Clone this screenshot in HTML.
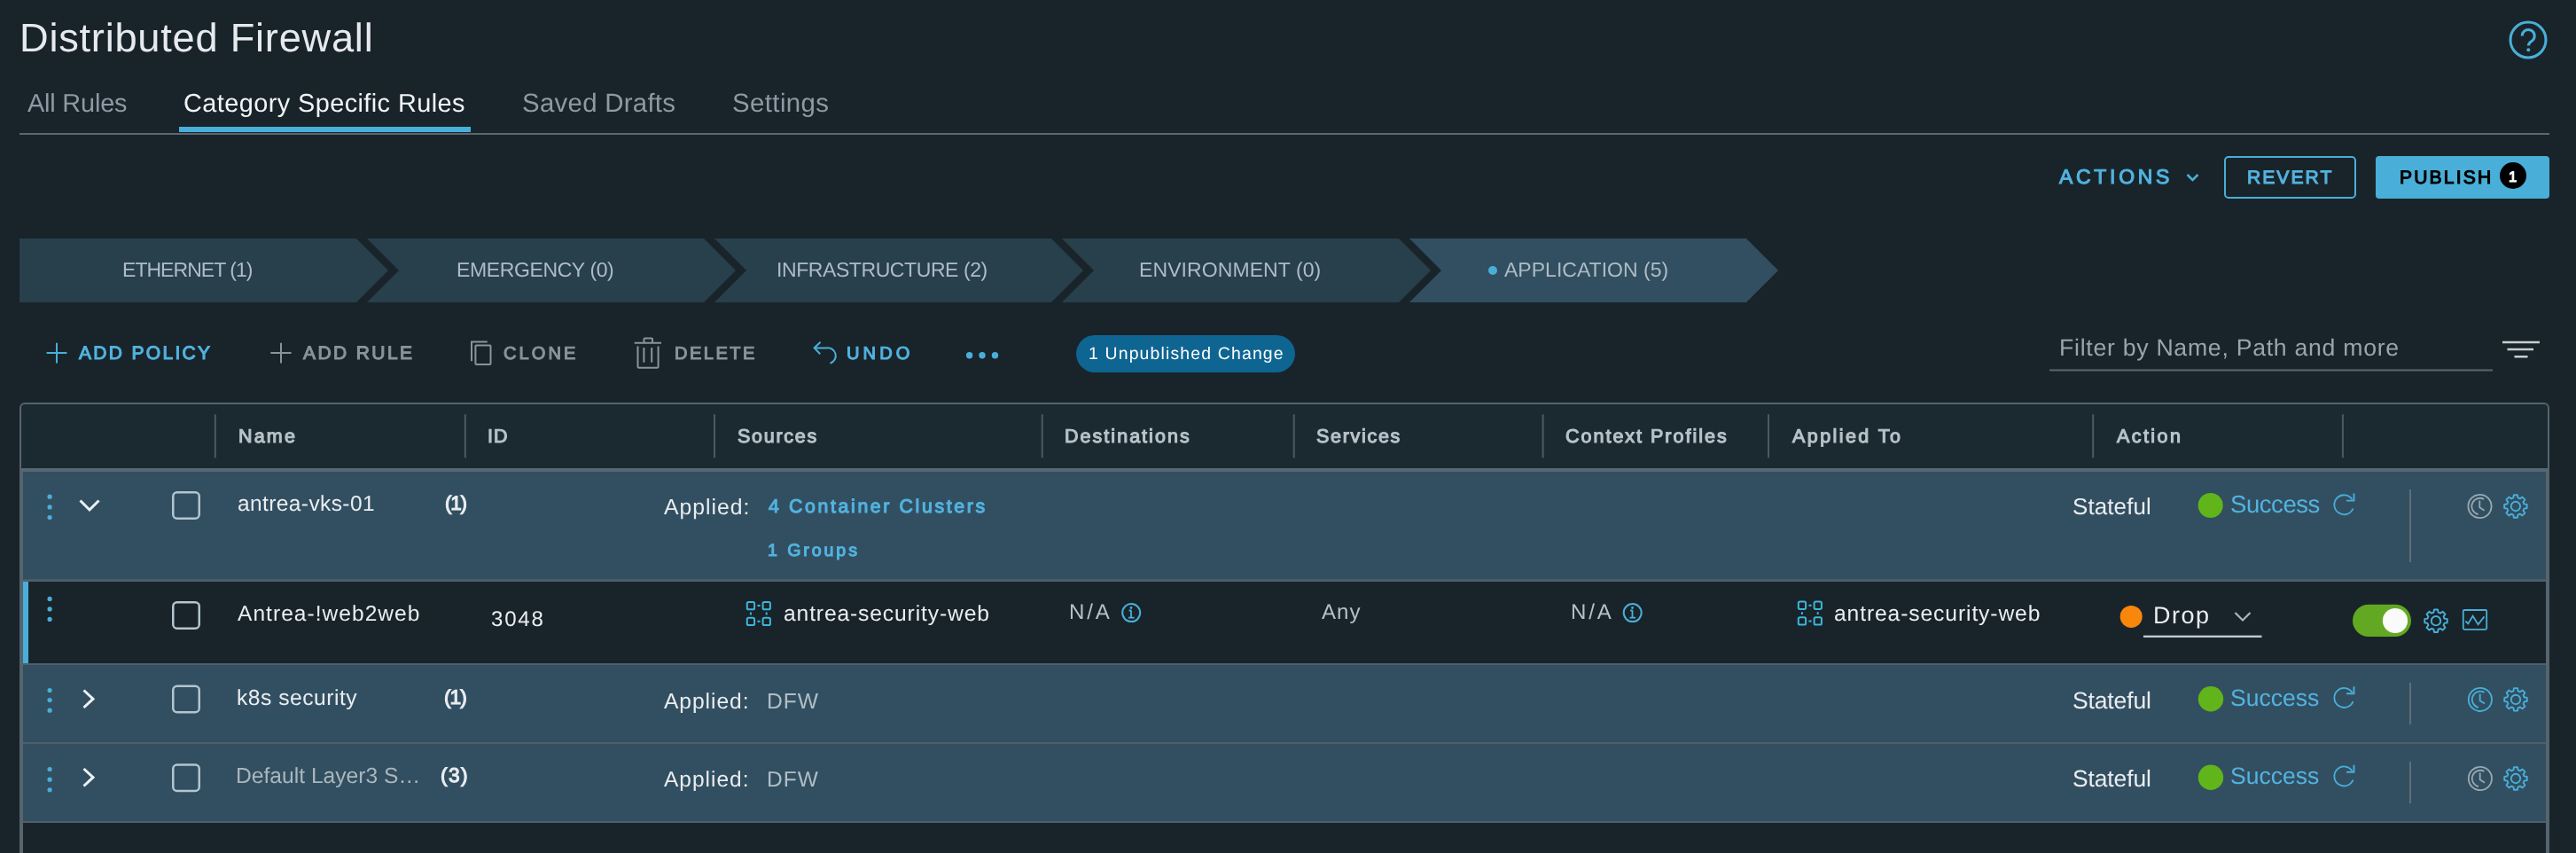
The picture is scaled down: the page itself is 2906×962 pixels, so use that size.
<!DOCTYPE html>
<html><head><meta charset="utf-8"><title>Distributed Firewall</title>
<style>
html,body{margin:0;padding:0;}
body{width:2906px;height:962px;overflow:hidden;background:#19242a;position:relative;font-family:"Liberation Sans",sans-serif;}
.s{position:absolute;left:0;top:0;}
.t{position:absolute;white-space:nowrap;line-height:1;will-change:transform;text-rendering:geometricPrecision;}
</style></head><body>
<svg class="s" width="2906" height="962" viewBox="0 0 2906 962"><rect x="22" y="150" width="2854" height="2" fill="#5b666d"/><rect x="202" y="143" width="329" height="6" fill="#49afd9"/><circle cx="2852" cy="45" r="20" fill="none" stroke="#49afd9" stroke-width="3"/><path d="M2845.2 40.5 A7 7 0 1 1 2856.5 46 Q2852.3 48.5 2852.3 51.5" fill="none" stroke="#49afd9" stroke-width="3"/><circle cx="2852.3" cy="56.3" r="2" fill="#49afd9"/><polyline points="2467.5,197 2473.5,203 2479.5,197" fill="none" stroke="#49afd9" stroke-width="2.5"/><rect x="2510" y="177" width="147" height="46" rx="4" fill="none" stroke="#49afd9" stroke-width="2"/><rect x="2680" y="176" width="196" height="48" rx="4" fill="#49afd9"/><circle cx="2835" cy="198" r="15" fill="#000"/><polygon points="22,269 402,269 438,305 402,341 22,341" fill="#283f4c"/><polygon points="414,269 794,269 830,305 794,341 414,341 450,305" fill="#283f4c"/><polygon points="806,269 1186,269 1222,305 1186,341 806,341 842,305" fill="#283f4c"/><polygon points="1198,269 1578,269 1614,305 1578,341 1198,341 1234,305" fill="#283f4c"/><polygon points="1590,269 1970,269 2006,305 1970,341 1590,341 1626,305" fill="#324f61"/><circle cx="1684" cy="305" r="5" fill="#49afd9"/><path d="M52.6 398 H75.4 M64 386.8 V409.4" stroke="#49afd9" stroke-width="2"/><path d="M305.3 398 H328.6 M317 386.8 V409.4" stroke="#8a9399" stroke-width="2"/><path d="M532 407.3 V385.4 H549.8" fill="none" stroke="#8a9399" stroke-width="2"/><rect x="536.4" y="389.6" width="17.1" height="21.3" rx="0.8" fill="none" stroke="#8a9399" stroke-width="2"/><path d="M715.7 386.8 H746 M726.5 386.8 V382.5 Q726.5 381.5 727.5 381.5 H735 Q736 381.5 736 382.5 V386.8 M719.5 390.5 V413.2 Q719.5 414.7 721 414.7 H741.1 Q742.6 414.7 742.6 413.2 V390.5 M726.4 391.9 V408.7 M735.2 391.9 V408.7" fill="none" stroke="#8a9399" stroke-width="2"/><path d="M925.6 385.8 L918.6 392.4 L925.2 399.3 M918.6 392.4 H932 A9 9 0 0 1 936.5 409.8" fill="none" stroke="#49afd9" stroke-width="2"/><circle cx="1093.6" cy="400.7" r="3.7" fill="#49afd9"/><circle cx="1108" cy="400.7" r="3.7" fill="#49afd9"/><circle cx="1122.5" cy="400.7" r="3.7" fill="#49afd9"/><rect x="1214" y="378" width="247" height="42" rx="21" fill="#0f6592"/><rect x="2312" y="416.5" width="500" height="2" fill="#5c6870"/><path d="M2823 386 H2865 M2828.5 394.1 H2858 M2836.5 402.3 H2851.5" stroke="#c6ced3" stroke-width="2.5"/><rect x="23" y="455" width="2852" height="700" rx="5" fill="#1b2a31" stroke="#56646e" stroke-width="2"/><rect x="24" y="528" width="2850" height="4" fill="#566773"/><rect x="241.8" y="467.3" width="2" height="49" fill="#4b5a64"/><rect x="523.8" y="467.3" width="2" height="49" fill="#4b5a64"/><rect x="805" y="467.3" width="2" height="49" fill="#4b5a64"/><rect x="1174.7" y="467.3" width="2" height="49" fill="#4b5a64"/><rect x="1458.7" y="467.3" width="2" height="49" fill="#4b5a64"/><rect x="1739.6" y="467.3" width="2" height="49" fill="#4b5a64"/><rect x="1994" y="467.3" width="2" height="49" fill="#4b5a64"/><rect x="2360.2" y="467.3" width="2" height="49" fill="#4b5a64"/><rect x="2641.9" y="467.3" width="2" height="49" fill="#4b5a64"/><rect x="22" y="532" width="2854" height="430" fill="#56646e"/><rect x="26" y="532" width="2846" height="121.5" fill="#324f61"/><rect x="26" y="653.5" width="2846" height="2.5" fill="#4e5f6b"/><rect x="26" y="656" width="2846" height="92" fill="#19242a"/><rect x="26" y="656" width="6" height="92" fill="#49afd9"/><rect x="26" y="748" width="2846" height="2" fill="#4e5f6b"/><rect x="26" y="750" width="2846" height="87" fill="#324f61"/><rect x="26" y="837" width="2846" height="2" fill="#4e5f6b"/><rect x="26" y="839" width="2846" height="87" fill="#324f61"/><rect x="26" y="926" width="2846" height="2" fill="#4e5f6b"/><rect x="26" y="928" width="2846" height="40" fill="#19242a"/><circle cx="56.1" cy="560.2" r="2.6" fill="#49afd9"/><circle cx="56.1" cy="571.9" r="2.6" fill="#49afd9"/><circle cx="56.1" cy="583.5" r="2.6" fill="#49afd9"/><polyline points="90.5,564.5 101,575 111.5,564.5" fill="none" stroke="#eef1f4" stroke-width="3"/><rect x="195.25" y="555.25" width="29.5" height="29.5" rx="4.5" fill="none" stroke="#b3c5cf" stroke-width="2.5"/><circle cx="2493.7" cy="570" r="14" fill="#61b51a"/><path d="M2653.60 563.30 A11 11 0 1 0 2654.50 573.50" fill="none" stroke="#49afd9" stroke-width="1.8"/><path d="M2647.10 564.60 H2655.50 V556.60" fill="none" stroke="#49afd9" stroke-width="1.9"/><rect x="2718" y="552" width="2" height="82" fill="#5e6e78"/><circle cx="2797.5" cy="571" r="13.1" fill="none" stroke="#9aa9b1" stroke-width="1.8"/><path d="M2802.10 563.00 A9.2 9.2 0 1 0 2795.60 580.00" fill="none" stroke="#9aa9b1" stroke-width="1.8"/><path d="M2797.30 564.50 V572.30 L2802.60 575.70" fill="none" stroke="#9aa9b1" stroke-width="1.8"/><path d="M2835.29 561.45 L2835.88 558.26 L2839.92 558.26 L2840.51 561.45 L2842.81 562.40 L2845.48 560.56 L2848.34 563.42 L2846.50 566.09 L2847.45 568.39 L2850.64 568.98 L2850.64 573.02 L2847.45 573.61 L2846.50 575.91 L2848.34 578.58 L2845.48 581.44 L2842.81 579.60 L2840.51 580.55 L2839.92 583.74 L2835.88 583.74 L2835.29 580.55 L2832.99 579.60 L2830.32 581.44 L2827.46 578.58 L2829.30 575.91 L2828.35 573.61 L2825.16 573.02 L2825.16 568.98 L2828.35 568.39 L2829.30 566.09 L2827.46 563.42 L2830.32 560.56 L2832.99 562.40Z" fill="none" stroke="#49afd9" stroke-width="1.9" stroke-linejoin="round"/><circle cx="2837.9" cy="571" r="5.2" fill="none" stroke="#49afd9" stroke-width="1.9"/><circle cx="56.1" cy="675.4" r="2.6" fill="#49afd9"/><circle cx="56.1" cy="686.9" r="2.6" fill="#49afd9"/><circle cx="56.1" cy="698.4" r="2.6" fill="#49afd9"/><rect x="195.25" y="679.25" width="29.5" height="29.5" rx="4.5" fill="none" stroke="#b3c5cf" stroke-width="2.5"/><rect x="842.80" y="679.00" width="8.3" height="8.3" rx="1.6" fill="none" stroke="#3db6d8" stroke-width="2"/><rect x="842.80" y="696.70" width="8.3" height="8.3" rx="1.6" fill="none" stroke="#3db6d8" stroke-width="2"/><rect x="860.60" y="679.00" width="8.3" height="8.3" rx="1.6" fill="none" stroke="#3db6d8" stroke-width="2"/><rect x="860.60" y="696.70" width="8.3" height="8.3" rx="1.6" fill="none" stroke="#3db6d8" stroke-width="2"/><path d="M854.40 683.10 H857.60 M854.40 700.80 H857.60 M846.90 690.60 V693.50 M864.70 690.60 V693.50" stroke="#3db6d8" stroke-width="2"/><circle cx="1276.2" cy="691.1" r="10" fill="none" stroke="#49afd9" stroke-width="2"/><circle cx="1276.0" cy="685.5" r="1.4" fill="#49afd9"/><path d="M1276.0 688.3000000000001 V696.5 M1273.0 696.7 H1279.6000000000001 M1273.6000000000001 688.5 H1276.2" stroke="#49afd9" stroke-width="1.8" fill="none"/><circle cx="1841.7" cy="691.1" r="10" fill="none" stroke="#49afd9" stroke-width="2"/><circle cx="1841.5" cy="685.5" r="1.4" fill="#49afd9"/><path d="M1841.5 688.3000000000001 V696.5 M1838.5 696.7 H1845.1000000000001 M1839.1000000000001 688.5 H1841.7" stroke="#49afd9" stroke-width="1.8" fill="none"/><rect x="2028.80" y="678.60" width="8.3" height="8.3" rx="1.6" fill="none" stroke="#3db6d8" stroke-width="2"/><rect x="2028.80" y="696.30" width="8.3" height="8.3" rx="1.6" fill="none" stroke="#3db6d8" stroke-width="2"/><rect x="2046.60" y="678.60" width="8.3" height="8.3" rx="1.6" fill="none" stroke="#3db6d8" stroke-width="2"/><rect x="2046.60" y="696.30" width="8.3" height="8.3" rx="1.6" fill="none" stroke="#3db6d8" stroke-width="2"/><path d="M2040.40 682.70 H2043.60 M2040.40 700.40 H2043.60 M2032.90 690.20 V693.10 M2050.70 690.20 V693.10" stroke="#3db6d8" stroke-width="2"/><circle cx="2404.2" cy="695.4" r="12.5" fill="#f8870b"/><polyline points="2521.5,691 2530,699.5 2538.5,691" fill="none" stroke="#aab5bb" stroke-width="2.2"/><rect x="2418" y="716.6" width="133.5" height="2.4" fill="#c0c9ce"/><rect x="2654" y="681.7" width="66" height="36.4" rx="18.2" fill="#62a822"/><circle cx="2702" cy="700" r="14.1" fill="#fafafa"/><path d="M2745.39 690.65 L2745.98 687.46 L2750.02 687.46 L2750.61 690.65 L2752.91 691.60 L2755.58 689.76 L2758.44 692.62 L2756.60 695.29 L2757.55 697.59 L2760.74 698.18 L2760.74 702.22 L2757.55 702.81 L2756.60 705.11 L2758.44 707.78 L2755.58 710.64 L2752.91 708.80 L2750.61 709.75 L2750.02 712.94 L2745.98 712.94 L2745.39 709.75 L2743.09 708.80 L2740.42 710.64 L2737.56 707.78 L2739.40 705.11 L2738.45 702.81 L2735.26 702.22 L2735.26 698.18 L2738.45 697.59 L2739.40 695.29 L2737.56 692.62 L2740.42 689.76 L2743.09 691.60Z" fill="none" stroke="#49afd9" stroke-width="1.9" stroke-linejoin="round"/><circle cx="2748" cy="700.2" r="5.2" fill="none" stroke="#49afd9" stroke-width="1.9"/><rect x="2778.8" y="688" width="26.4" height="21.8" rx="1.2" fill="none" stroke="#49afd9" stroke-width="1.8"/><polyline points="2781.4,700.5 2784.3,703.4 2789.6,694.7 2795.6,704.3 2802.5,695.4" fill="none" stroke="#49afd9" stroke-width="1.8"/><circle cx="56.1" cy="778.5" r="2.6" fill="#49afd9"/><circle cx="56.1" cy="789.5" r="2.6" fill="#49afd9"/><circle cx="56.1" cy="801.2" r="2.6" fill="#49afd9"/><polyline points="94.5,778.5 105,788.2 94.5,798" fill="none" stroke="#eef1f4" stroke-width="3"/><rect x="195.25" y="773.75" width="29.5" height="29.5" rx="4.5" fill="none" stroke="#b3c5cf" stroke-width="2.5"/><circle cx="2494" cy="788.2" r="14.2" fill="#61b51a"/><path d="M2653.60 781.00 A11 11 0 1 0 2654.50 791.20" fill="none" stroke="#49afd9" stroke-width="1.8"/><path d="M2647.10 782.30 H2655.50 V774.30" fill="none" stroke="#49afd9" stroke-width="1.9"/><rect x="2718" y="770" width="2" height="47" fill="#5e6e78"/><circle cx="2797.9" cy="788.9" r="13.1" fill="none" stroke="#49afd9" stroke-width="1.8"/><path d="M2802.50 780.90 A9.2 9.2 0 1 0 2796.00 797.90" fill="none" stroke="#49afd9" stroke-width="1.8"/><path d="M2797.70 782.40 V790.20 L2803.00 793.60" fill="none" stroke="#49afd9" stroke-width="1.8"/><path d="M2835.39 779.35 L2835.98 776.16 L2840.02 776.16 L2840.61 779.35 L2842.91 780.30 L2845.58 778.46 L2848.44 781.32 L2846.60 783.99 L2847.55 786.29 L2850.74 786.88 L2850.74 790.92 L2847.55 791.51 L2846.60 793.81 L2848.44 796.48 L2845.58 799.34 L2842.91 797.50 L2840.61 798.45 L2840.02 801.64 L2835.98 801.64 L2835.39 798.45 L2833.09 797.50 L2830.42 799.34 L2827.56 796.48 L2829.40 793.81 L2828.45 791.51 L2825.26 790.92 L2825.26 786.88 L2828.45 786.29 L2829.40 783.99 L2827.56 781.32 L2830.42 778.46 L2833.09 780.30Z" fill="none" stroke="#49afd9" stroke-width="1.9" stroke-linejoin="round"/><circle cx="2838" cy="788.9" r="5.2" fill="none" stroke="#49afd9" stroke-width="1.9"/><circle cx="56.1" cy="867.5" r="2.6" fill="#49afd9"/><circle cx="56.1" cy="879.2" r="2.6" fill="#49afd9"/><circle cx="56.1" cy="890.8" r="2.6" fill="#49afd9"/><polyline points="94.5,867 105,876.7 94.5,886.5" fill="none" stroke="#eef1f4" stroke-width="3"/><rect x="195.25" y="862.55" width="29.5" height="29.5" rx="4.5" fill="none" stroke="#b3c5cf" stroke-width="2.5"/><circle cx="2494" cy="876.7" r="14.2" fill="#61b51a"/><path d="M2653.60 869.50 A11 11 0 1 0 2654.50 879.70" fill="none" stroke="#49afd9" stroke-width="1.8"/><path d="M2647.10 870.80 H2655.50 V862.80" fill="none" stroke="#49afd9" stroke-width="1.9"/><rect x="2718" y="859" width="2" height="47" fill="#5e6e78"/><circle cx="2797.9" cy="878" r="13.1" fill="none" stroke="#9aa9b1" stroke-width="1.8"/><path d="M2802.50 870.00 A9.2 9.2 0 1 0 2796.00 887.00" fill="none" stroke="#9aa9b1" stroke-width="1.8"/><path d="M2797.70 871.50 V879.30 L2803.00 882.70" fill="none" stroke="#9aa9b1" stroke-width="1.8"/><path d="M2835.39 868.45 L2835.98 865.26 L2840.02 865.26 L2840.61 868.45 L2842.91 869.40 L2845.58 867.56 L2848.44 870.42 L2846.60 873.09 L2847.55 875.39 L2850.74 875.98 L2850.74 880.02 L2847.55 880.61 L2846.60 882.91 L2848.44 885.58 L2845.58 888.44 L2842.91 886.60 L2840.61 887.55 L2840.02 890.74 L2835.98 890.74 L2835.39 887.55 L2833.09 886.60 L2830.42 888.44 L2827.56 885.58 L2829.40 882.91 L2828.45 880.61 L2825.26 880.02 L2825.26 875.98 L2828.45 875.39 L2829.40 873.09 L2827.56 870.42 L2830.42 867.56 L2833.09 869.40Z" fill="none" stroke="#49afd9" stroke-width="1.9" stroke-linejoin="round"/><circle cx="2838" cy="878" r="5.2" fill="none" stroke="#49afd9" stroke-width="1.9"/></svg>
<div class="t" style="left:22.00px;top:19.99px;font-size:45.22px;letter-spacing:0.748px;color:#e6eaee;font-weight:normal">Distributed Firewall</div><div class="t" style="left:31.00px;top:103.23px;font-size:28.86px;letter-spacing:-0.180px;color:#8d9aa3;font-weight:normal">All Rules</div><div class="t" style="left:207.00px;top:103.23px;font-size:28.86px;letter-spacing:0.430px;color:#f2f4f6;font-weight:normal">Category Specific Rules</div><div class="t" style="left:588.70px;top:101.96px;font-size:29.42px;letter-spacing:0.275px;color:#8d9aa3;font-weight:normal">Saved Drafts</div><div class="t" style="left:825.70px;top:101.96px;font-size:29.42px;letter-spacing:0.393px;color:#8d9aa3;font-weight:normal">Settings</div><div class="t" style="left:2322.85px;top:187.62px;font-size:22.98px;letter-spacing:3.721px;color:#52b3e0;-webkit-text-stroke:1.1px #52b3e0">ACTIONS</div><div class="t" style="left:2534.55px;top:190.20px;font-size:21.12px;letter-spacing:2.011px;color:#52b3e0;-webkit-text-stroke:1.1px #52b3e0">REVERT</div><div class="t" style="left:2706.55px;top:190.20px;font-size:21.12px;letter-spacing:2.135px;color:#000000;-webkit-text-stroke:1.1px #000000">PUBLISH</div><div class="t" style="left:2830.05px;top:191.87px;font-size:16.70px;letter-spacing:0.000px;color:#ffffff;-webkit-text-stroke:1.1px #ffffff">1</div><div class="t" style="left:137.80px;top:293.35px;font-size:23.04px;letter-spacing:-0.981px;color:#adbcc5;font-weight:normal">ETHERNET (1)</div><div class="t" style="left:514.50px;top:293.35px;font-size:23.04px;letter-spacing:-0.402px;color:#adbcc5;font-weight:normal">EMERGENCY (0)</div><div class="t" style="left:875.80px;top:293.35px;font-size:23.04px;letter-spacing:-0.435px;color:#adbcc5;font-weight:normal">INFRASTRUCTURE (2)</div><div class="t" style="left:1284.60px;top:293.35px;font-size:23.04px;letter-spacing:0.067px;color:#adbcc5;font-weight:normal">ENVIRONMENT (0)</div><div class="t" style="left:1696.80px;top:293.35px;font-size:23.04px;letter-spacing:0.002px;color:#adbcc5;font-weight:normal">APPLICATION (5)</div><div class="t" style="left:89.25px;top:388.48px;font-size:21.00px;letter-spacing:2.321px;color:#52b3e0;-webkit-text-stroke:1.1px #52b3e0">ADD POLICY</div><div class="t" style="left:341.55px;top:388.48px;font-size:21.00px;letter-spacing:2.398px;color:#8a9399;-webkit-text-stroke:1.1px #8a9399">ADD RULE</div><div class="t" style="left:567.55px;top:388.82px;font-size:20.07px;letter-spacing:3.051px;color:#8a9399;-webkit-text-stroke:1.1px #8a9399">CLONE</div><div class="t" style="left:760.55px;top:388.82px;font-size:20.07px;letter-spacing:2.457px;color:#8a9399;-webkit-text-stroke:1.1px #8a9399">DELETE</div><div class="t" style="left:954.55px;top:388.82px;font-size:20.07px;letter-spacing:4.089px;color:#52b3e0;-webkit-text-stroke:1.1px #52b3e0">UNDO</div><div class="t" style="left:1227.50px;top:390.35px;font-size:19.42px;letter-spacing:1.166px;color:#ffffff;font-weight:normal">1 Unpublished Change</div><div class="t" style="left:2322.70px;top:379.31px;font-size:26.67px;letter-spacing:0.720px;color:#9aa4aa;font-weight:normal">Filter by Name, Path and more</div><div class="t" style="left:268.55px;top:481.85px;font-size:21.50px;letter-spacing:2.169px;color:#b8c3c9;-webkit-text-stroke:1.1px #b8c3c9">Name</div><div class="t" style="left:549.85px;top:481.85px;font-size:21.50px;letter-spacing:0.927px;color:#b8c3c9;-webkit-text-stroke:1.1px #b8c3c9">ID</div><div class="t" style="left:831.75px;top:481.85px;font-size:21.50px;letter-spacing:1.730px;color:#b8c3c9;-webkit-text-stroke:1.1px #b8c3c9">Sources</div><div class="t" style="left:1200.95px;top:481.85px;font-size:21.50px;letter-spacing:2.031px;color:#b8c3c9;-webkit-text-stroke:1.1px #b8c3c9">Destinations</div><div class="t" style="left:1485.05px;top:481.85px;font-size:21.50px;letter-spacing:1.701px;color:#b8c3c9;-webkit-text-stroke:1.1px #b8c3c9">Services</div><div class="t" style="left:1765.85px;top:481.85px;font-size:21.50px;letter-spacing:1.993px;color:#b8c3c9;-webkit-text-stroke:1.1px #b8c3c9">Context Profiles</div><div class="t" style="left:2021.55px;top:481.85px;font-size:21.50px;letter-spacing:2.428px;color:#b8c3c9;-webkit-text-stroke:1.1px #b8c3c9">Applied To</div><div class="t" style="left:2387.55px;top:481.85px;font-size:21.50px;letter-spacing:2.420px;color:#b8c3c9;-webkit-text-stroke:1.1px #b8c3c9">Action</div><div class="t" style="left:267.50px;top:556.94px;font-size:24.49px;letter-spacing:0.402px;color:#e9edf0;font-weight:normal">antrea-vks-01</div><div class="t" style="left:501.75px;top:557.08px;font-size:22.44px;letter-spacing:-1.225px;color:#e9edf0;-webkit-text-stroke:1.1px #e9edf0">(1)</div><div class="t" style="left:748.60px;top:560.52px;font-size:24.78px;letter-spacing:0.969px;color:#e9edf0;font-weight:normal">Applied:</div><div class="t" style="left:867.35px;top:561.20px;font-size:21.28px;letter-spacing:2.647px;color:#52b3e0;-webkit-text-stroke:1.1px #52b3e0">4 Container Clusters</div><div class="t" style="left:866.35px;top:612.43px;font-size:19.57px;letter-spacing:2.925px;color:#52b3e0;-webkit-text-stroke:1.1px #52b3e0">1 Groups</div><div class="t" style="left:2337.70px;top:559.54px;font-size:25.94px;letter-spacing:0.115px;color:#e9edf0;font-weight:normal">Stateful</div><div class="t" style="left:2515.70px;top:554.63px;font-size:27.54px;letter-spacing:-0.455px;color:#52b3e0;font-weight:normal">Success</div><div class="t" style="left:268.00px;top:680.92px;font-size:24.49px;letter-spacing:1.062px;color:#e9edf0;font-weight:normal">Antrea-!web2web</div><div class="t" style="left:554.30px;top:687.29px;font-size:24.06px;letter-spacing:1.793px;color:#e9edf0;font-weight:normal">3048</div><div class="t" style="left:883.50px;top:680.74px;font-size:24.64px;letter-spacing:0.870px;color:#e9edf0;font-weight:normal">antrea-security-web</div><div class="t" style="left:1206.20px;top:679.45px;font-size:24.06px;letter-spacing:2.877px;color:#b5c1c7;font-weight:normal">N/A</div><div class="t" style="left:1491.10px;top:679.45px;font-size:24.06px;letter-spacing:1.044px;color:#b5c1c7;font-weight:normal">Any</div><div class="t" style="left:1772.00px;top:679.45px;font-size:24.06px;letter-spacing:2.877px;color:#b5c1c7;font-weight:normal">N/A</div><div class="t" style="left:2068.90px;top:680.74px;font-size:24.64px;letter-spacing:0.898px;color:#e9edf0;font-weight:normal">antrea-security-web</div><div class="t" style="left:2429.10px;top:680.74px;font-size:26.96px;letter-spacing:1.532px;color:#e9edf0;font-weight:normal">Drop</div><div class="t" style="left:267.10px;top:775.72px;font-size:24.64px;letter-spacing:0.510px;color:#e9edf0;font-weight:normal">k8s security</div><div class="t" style="left:501.35px;top:774.91px;font-size:22.76px;letter-spacing:-1.014px;color:#e9edf0;-webkit-text-stroke:1.1px #e9edf0">(1)</div><div class="t" style="left:748.90px;top:779.70px;font-size:24.64px;letter-spacing:0.936px;color:#e9edf0;font-weight:normal">Applied:</div><div class="t" style="left:865.10px;top:779.70px;font-size:24.64px;letter-spacing:0.937px;color:#b0bec6;font-weight:normal">DFW</div><div class="t" style="left:2337.50px;top:776.51px;font-size:26.52px;letter-spacing:-0.147px;color:#e9edf0;font-weight:normal">Stateful</div><div class="t" style="left:2516.30px;top:773.59px;font-size:26.52px;letter-spacing:-0.009px;color:#52b3e0;font-weight:normal">Success</div><div class="t" style="left:266.10px;top:863.62px;font-size:24.64px;letter-spacing:0.005px;color:#a9b6bd;font-weight:normal">Default Layer3 S…</div><div class="t" style="left:496.65px;top:863.01px;font-size:22.76px;letter-spacing:1.336px;color:#e9edf0;-webkit-text-stroke:1.1px #e9edf0">(3)</div><div class="t" style="left:748.90px;top:867.90px;font-size:24.49px;letter-spacing:1.003px;color:#e9edf0;font-weight:normal">Applied:</div><div class="t" style="left:865.10px;top:867.90px;font-size:24.49px;letter-spacing:1.031px;color:#b0bec6;font-weight:normal">DFW</div><div class="t" style="left:2337.50px;top:864.71px;font-size:26.38px;letter-spacing:-0.076px;color:#e9edf0;font-weight:normal">Stateful</div><div class="t" style="left:2516.30px;top:862.49px;font-size:26.52px;letter-spacing:-0.009px;color:#52b3e0;font-weight:normal">Success</div>
</body></html>
